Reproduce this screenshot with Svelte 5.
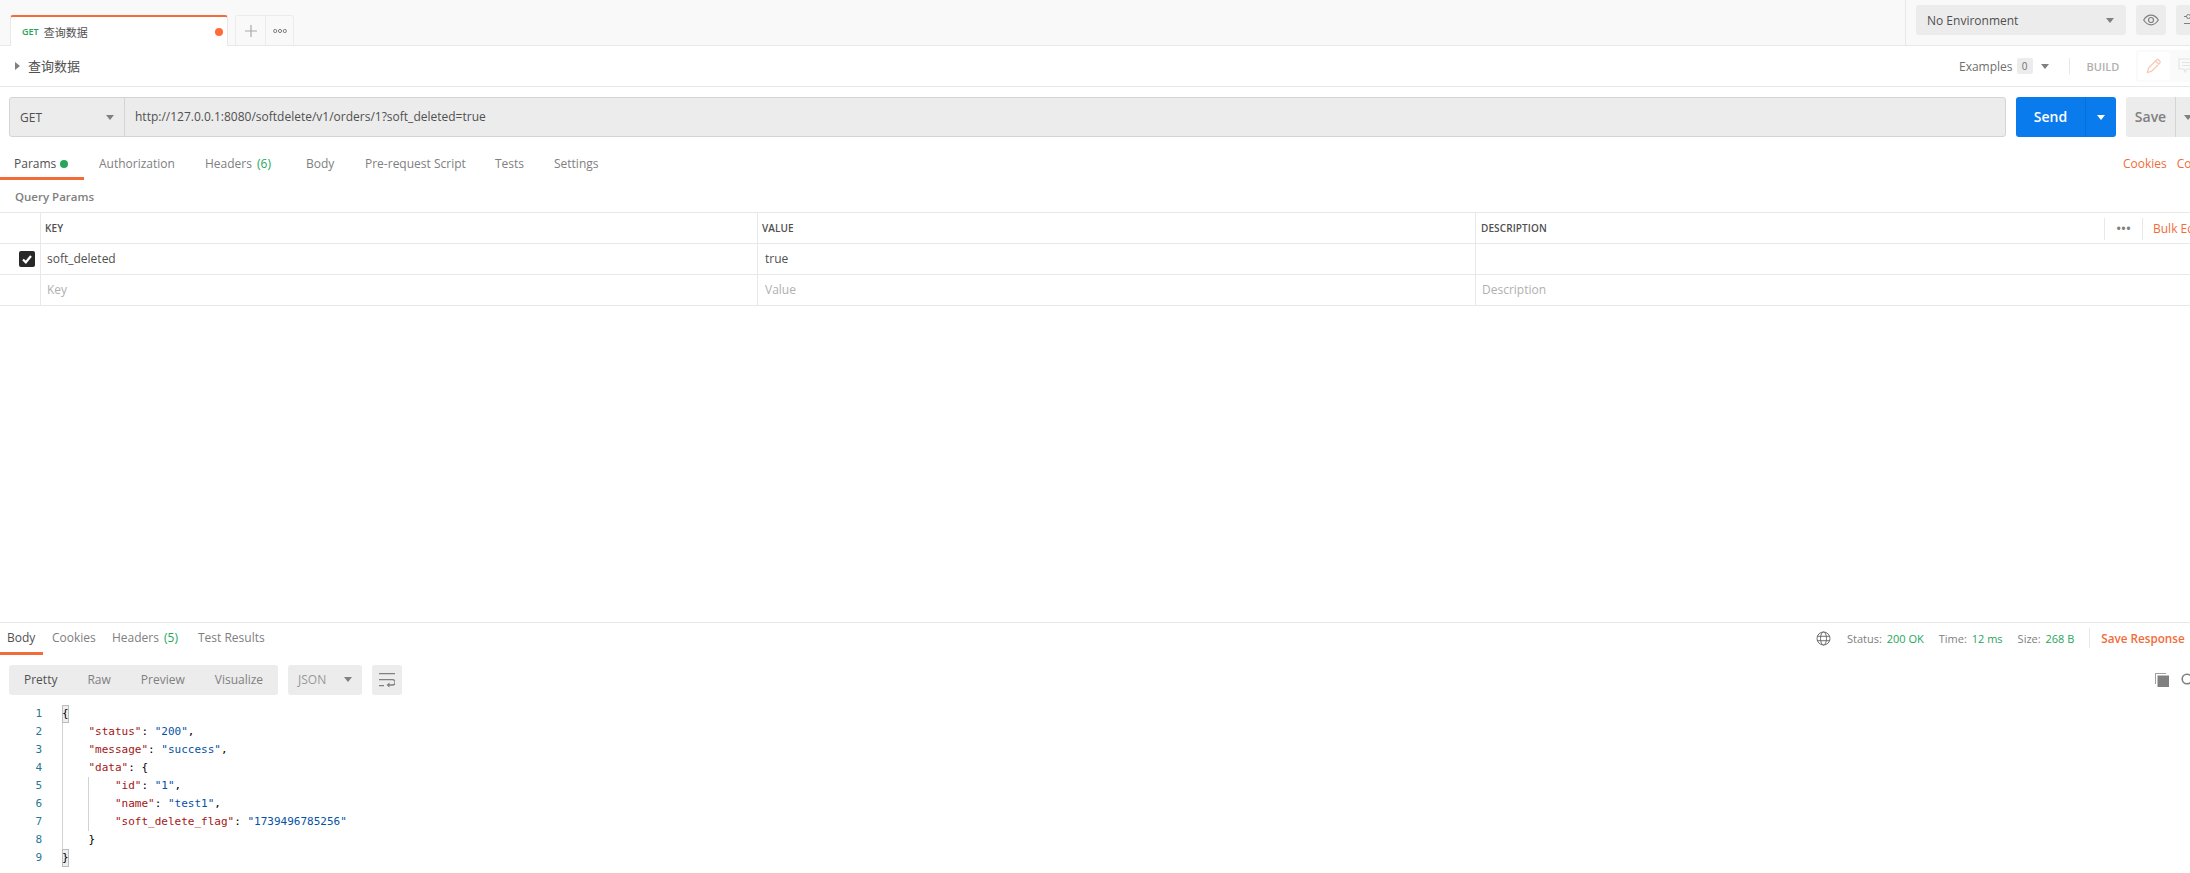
<script>
  const requestTabs = [
    { name: "Authorization", width: 106 },
    { name: "Headers", count: "(6)", width: 101 },
    { name: "Body", width: 59 },
    { name: "Pre-request Script", width: 130 },
    { name: "Tests", width: 59 },
    { name: "Settings", width: 60 }
  ];

  const responseTabs = [
    { name: "Cookies", width: 60 },
    { name: "Headers", count: "(5)", width: 86 },
    { name: "Test Results", width: 80 }
  ];

  const lines = [
    [["p", "{"]],
    [["k", '    "status"'], ["p", ": "], ["s", '"200"'], ["p", ","]],
    [["k", '    "message"'], ["p", ": "], ["s", '"success"'], ["p", ","]],
    [["k", '    "data"'], ["p", ": {"]],
    [["k", '        "id"'], ["p", ": "], ["s", '"1"'], ["p", ","]],
    [["k", '        "name"'], ["p", ": "], ["s", '"test1"'], ["p", ","]],
    [["k", '        "soft_delete_flag"'], ["p", ": "], ["s", '"1739496785256"']],
    [["p", "    }"]],
    [["p", "}"]]
  ];
</script>

<div class="page">
  <div class="topbar">
    <div class="strip">
      <div class="tab">
        <span class="get">GET</span>
        <span class="tab-name">查询数据</span>
        <span class="tab-dot"></span>
      </div>
      <div class="tab-btn plus">
        <svg width="12" height="12" viewBox="0 0 12 12"><path d="M6 0v12M0 6h12" stroke="#a9a9a9" stroke-width="1.2" fill="none" /></svg>
      </div>
      <div class="tab-btn more">
        <svg width="14" height="6" viewBox="0 0 14 6">
          <circle cx="2.2" cy="3" r="1.6" fill="none" stroke="#808080" />
          <circle cx="7" cy="3" r="1.6" fill="none" stroke="#808080" />
          <circle cx="11.8" cy="3" r="1.6" fill="none" stroke="#808080" />
        </svg>
      </div>
    </div>
    <div class="env-area">
      <div class="env">
        <span>No Environment</span>
        <i class="caret"></i>
      </div>
      <div class="square">
        <svg width="16" height="12" viewBox="0 0 16 12">
          <path d="M.7 6C2.700 2.800 5.200 1.200 8 1.200s5.300 1.600 7.300 4.800c-2 3.200-4.500 4.800-7.300 4.800S2.700 9.200.7 6z" fill="none" stroke="#808080" stroke-width="1.200" />
          <circle cx="8" cy="6" r="2.500" fill="none" stroke="#808080" stroke-width="1.200" />
        </svg>
      </div>
      <div class="square">
        <svg width="14" height="14" viewBox="0 0 14 14">
          <path d="M0 3.500h2.500M6.500 3.500H14M0 10.500h14" stroke="#808080" fill="none" />
          <circle cx="4.500" cy="3.500" r="2" fill="none" stroke="#808080" />
        </svg>
      </div>
    </div>
  </div>

  <div class="titlebar">
    <div class="title">
      <i class="arrow"></i>
      <span>查询数据</span>
    </div>
    <div class="title-right">
      <span>Examples</span>
      <span class="badge">0</span>
      <i class="caret"></i>
      <span class="vr"></span>
      <span class="build">BUILD</span>
      <div class="modes">
        <div class="mode active">
          <svg width="16" height="16" viewBox="0 0 16 16">
            <path d="M1.500 14.500l1-4.500 8-8a1.500 1.500 0 0 1 2.200 0l1 1a1.500 1.500 0 0 1 0 2.200l-8 8zM9.500 3l3.500 3.500" fill="none" stroke="#f9c9b6" stroke-width="1.300" />
          </svg>
        </div>
        <div class="mode">
          <svg width="16" height="16" viewBox="0 0 16 16">
            <path d="M1 1h14v10H9l-2 3-1-3H1zM4 4.500h8M4 7.500h8" fill="none" stroke="#e3e3e3" stroke-width="1.100" />
          </svg>
        </div>
      </div>
    </div>
  </div>

  <div class="urlrow">
    <div class="urlbox">
      <div class="method">
        <span>GET</span>
        <i class="caret"></i>
      </div>
      <div class="url">http://127.0.0.1:8080/softdelete/v1/orders/1?soft_deleted=true</div>
    </div>
    <div class="send">
      <span class="send-label">Send</span>
      <span class="send-arrow"><i class="caret white"></i></span>
    </div>
    <div class="save">
      <span class="save-label">Save</span>
      <span class="save-arrow"><i class="caret"></i></span>
    </div>
  </div>

  <div class="reqtabs">
    <div class="reqtab first">Params <span class="green-dot"></span></div>
    {#each requestTabs as t}
      <div class="reqtab" style="width: {t.width}px">
        {t.name}
        {#if t.count}<span class="count">{t.count}</span>{/if}
      </div>
    {/each}
    <div class="links">
      <span>Cookies</span>
      <span>Code</span>
    </div>
  </div>

  <div class="query-title">Query Params</div>

  <div class="params">
    <div class="row head">
      <div class="cell check"></div>
      <div class="cell">KEY</div>
      <div class="cell">VALUE</div>
      <div class="cell desc">
        <span class="desc-label">DESCRIPTION</span>
        <span class="dots">•••</span>
        <span class="bulk">Bulk Edit</span>
      </div>
    </div>
    <div class="row">
      <div class="cell check">
        <span class="checkbox">
          <svg width="12" height="12" viewBox="0 0 12 12"><path d="M2 6.500l2.800 2.800L10 3" fill="none" stroke="#fff" stroke-width="2.200" /></svg>
        </span>
      </div>
      <div class="cell body">soft_deleted</div>
      <div class="cell body value">true</div>
      <div class="cell body"></div>
    </div>
    <div class="row">
      <div class="cell check"></div>
      <div class="cell body ph">Key</div>
      <div class="cell body value ph">Value</div>
      <div class="cell body ph">Description</div>
    </div>
  </div>

  <div class="spacer"></div>

  <div class="response">
    <div class="restabs">
      <div class="restab first">Body</div>
      {#each responseTabs as t}
        <div class="restab" style="width: {t.width}px">
          {t.name}
          {#if t.count}<span class="count">{t.count}</span>{/if}
        </div>
      {/each}
      <div class="meta">
        <svg width="15" height="15" viewBox="0 0 15 15">
          <g fill="none" stroke="#707070" stroke-width="1">
            <circle cx="7.500" cy="7.500" r="6.500" />
            <ellipse cx="7.500" cy="7.500" rx="3" ry="6.500" />
            <path d="M1 5.300h13M1 9.700h13" />
          </g>
        </svg>
        <span class="stat first-stat">Status: <b>200 OK</b></span>
        <span class="stat">Time: <b>12 ms</b></span>
        <span class="stat">Size: <b>268 B</b></span>
        <span class="vr tall"></span>
        <span class="save-response">Save Response</span>
      </div>
    </div>

    <div class="toolbar">
      <div class="modes-bar">
        <span class="dark">Pretty</span>
        <span>Raw</span>
        <span>Preview</span>
        <span>Visualize</span>
      </div>
      <div class="format">
        <span>JSON</span>
        <i class="caret"></i>
      </div>
      <div class="wrap">
        <svg width="16" height="15" viewBox="0 0 16 15">
          <path d="M0 .7h16M0 6.700h13.500a2.300 2.300 0 0 1 0 5.300H9M0 12.700h5" fill="none" stroke="#808080" stroke-width="1.300" />
          <path d="M10.500 9.500v5L7.500 12z" fill="#808080" />
        </svg>
      </div>
      <div class="tool-icons">
        <svg width="14" height="14" viewBox="0 0 14 14">
          <path d="M0 0h11v1H1v10H0z" fill="#a0a0a0" />
          <rect x="2.500" y="2.500" width="11.500" height="11.500" fill="#808080" />
        </svg>
        <svg width="14" height="14" viewBox="0 0 14 14">
          <circle cx="6" cy="6" r="4.800" fill="none" stroke="#808080" stroke-width="1.600" />
          <path d="M9.500 9.500L14 14" stroke="#808080" stroke-width="1.600" />
        </svg>
      </div>
    </div>

    <div class="code">
      <div class="guide outer"></div>
      <div class="guide inner"></div>
      {#each lines as parts, i}
        <div class="line">
          <span class="num">{i + 1}</span>
          <span class="text">
            {#each parts as [type, value]}<span class={type} class:brace={i == 0 || i == 8}>{value}</span>{/each}
          </span>
        </div>
      {/each}
    </div>
  </div>
</div>

<style>
  :global(body) {
    margin: 0;
    background: #fff;
  }

  .page {
    width: 2190px;
    height: 873px;
    overflow: hidden;
    display: flex;
    flex-direction: column;
    font-family: "Open Sans", "Noto Sans CJK SC", sans-serif;
    font-size: 12px;
    color: #808080;
  }

  .topbar {
    flex: none;
    display: flex;
    height: 45px;
    background: #f9f9f9;
    border-bottom: 1px solid #e8e8e8;
  }

  .strip {
    flex: none;
    width: 1906px;
    display: flex;
    align-items: flex-end;
    padding-left: 10px;
    box-sizing: border-box;
    gap: 7px;
    border-right: 1px solid #e8e8e8;
  }

  .tab {
    flex: none;
    width: 218px;
    height: 31px;
    box-sizing: border-box;
    display: flex;
    align-items: center;
    background: #fff;
    border-top: 2px solid #f26b3a;
    border-left: 1px solid #e8e8e8;
    border-right: 1px solid #e8e8e8;
    border-radius: 3px 3px 0 0;
    margin-bottom: -1px;
    padding-left: 11px;
    font-size: 11px;
  }

  .get {
    color: #26a65b;
    font-size: 9px;
    font-weight: 600;
    margin-right: 5px;
  }

  .tab-name {
    color: #505050;
    font-size: 11px;
  }

  .tab-dot {
    width: 8px;
    height: 8px;
    border-radius: 50%;
    background: #ff6c37;
    margin-left: auto;
    margin-right: 4px;
  }

  .tab-btn {
    flex: none;
    height: 30px;
    box-sizing: border-box;
    display: flex;
    align-items: center;
    justify-content: center;
    background: #f9f9f9;
    border: 1px solid #ececec;
    border-bottom: none;
  }

  .plus {
    width: 31px;
    border-radius: 3px 0 0 0;
  }

  .more {
    width: 28px;
    margin-left: -7px;
    border-left: none;
    border-radius: 0 3px 0 0;
  }

  .env-area {
    flex: none;
    display: flex;
    gap: 10px;
    padding: 5px 0 0 10px;
  }

  .env {
    width: 210px;
    height: 30px;
    box-sizing: border-box;
    background: #ececec;
    border-radius: 3px;
    display: flex;
    align-items: center;
    justify-content: space-between;
    padding: 0 12px 0 11px;
    color: #505050;
  }

  .square {
    width: 30px;
    height: 30px;
    flex: none;
    background: #ececec;
    border-radius: 3px;
    display: flex;
    align-items: center;
    justify-content: center;
  }

  .caret {
    display: inline-block;
    width: 0;
    height: 0;
    border-left: 4px solid transparent;
    border-right: 4px solid transparent;
    border-top: 5px solid #808080;
  }

  .caret.white {
    border-top-color: #fff;
  }

  .titlebar {
    flex: none;
    height: 40px;
    display: flex;
    border-bottom: 1px solid #e8e8e8;
  }

  .title {
    flex: none;
    width: 1959px;
    box-sizing: border-box;
    padding: 0 0 1px 15px;
    display: flex;
    align-items: center;
    gap: 8px;
    color: #505050;
    font-size: 13px;
  }

  .arrow {
    width: 0;
    height: 0;
    border-top: 4px solid transparent;
    border-bottom: 4px solid transparent;
    border-left: 5px solid #808080;
  }

  .title-right {
    flex: none;
    display: flex;
    align-items: center;
    color: #707070;
  }

  .badge {
    width: 16px;
    height: 16px;
    margin-left: 4px;
    background: #ececec;
    border-radius: 2px;
    font-size: 10px;
    line-height: 16px;
    text-align: center;
  }

  .title-right .caret {
    margin-left: 8px;
  }

  .vr {
    width: 1px;
    height: 16px;
    background: #e8e8e8;
    margin-left: 20px;
  }

  .build {
    margin-left: 17px;
    font-size: 11px;
    color: #b0b0b0;
    font-weight: 600;
  }

  .modes {
    display: flex;
    margin-left: 17px;
    background: #fafafa;
    padding: 2px;
    border-radius: 3px;
  }

  .mode {
    width: 32px;
    height: 28px;
    display: flex;
    align-items: center;
    justify-content: center;
    border-radius: 3px;
  }

  .mode.active {
    background: #fff;
  }

  .urlrow {
    flex: none;
    display: flex;
    padding: 10px 0 0 9px;
    height: 40px;
  }

  .urlbox {
    flex: none;
    width: 1997px;
    box-sizing: border-box;
    display: flex;
    background: #ececec;
    border: 1px solid #d4d4d4;
    border-radius: 3px;
  }

  .method {
    width: 115px;
    flex: none;
    box-sizing: border-box;
    display: flex;
    align-items: center;
    justify-content: space-between;
    padding: 0 10px;
    color: #505050;
    border-right: 1px solid #d4d4d4;
  }

  .url {
    padding-left: 10px;
    line-height: 38px;
    color: #505050;
  }

  .send {
    flex: none;
    width: 100px;
    margin-left: 10px;
    display: flex;
    background: #097bed;
    border-radius: 3px;
    color: #fff;
    font-size: 14px;
    font-weight: 600;
  }

  .send-label {
    width: 69px;
    line-height: 40px;
    text-align: center;
    border-right: 1px solid #0a6fd4;
  }

  .send-arrow {
    flex: 1;
    display: flex;
    align-items: center;
    justify-content: center;
  }

  .save-arrow {
    flex: 1;
    display: flex;
    align-items: center;
    padding-left: 8px;
  }

  .save {
    flex: none;
    width: 100px;
    margin-left: 10px;
    display: flex;
    background: #ececec;
    border-radius: 3px;
    color: #808080;
    font-size: 14px;
    font-weight: 600;
  }

  .save-label {
    width: 49px;
    line-height: 40px;
    text-align: center;
    border-right: 1px solid #d4d4d4;
  }

  .reqtabs {
    flex: none;
    height: 43px;
    display: flex;
    box-sizing: border-box;
    padding-top: 13px;
    position: relative;
  }

  .reqtab {
    flex: none;
    box-sizing: border-box;
    padding-left: 15px;
    height: 30px;
    line-height: 28px;
    color: #808080;
    white-space: nowrap;
  }

  .reqtab.first {
    width: 84px;
    padding: 0 0 0 14px;
    color: #505050;
    background: linear-gradient(#f26b3a, #f26b3a) 0 100% / 84px 3px no-repeat;
  }

  .green-dot {
    display: inline-block;
    width: 8px;
    height: 8px;
    border-radius: 50%;
    background: #26a65b;
    margin-left: 1px;
  }

  .count {
    color: #26a65b;
    margin-left: 2px;
  }

  .links {
    position: absolute;
    left: 2123px;
    top: 13px;
    line-height: 28px;
    display: flex;
    gap: 10px;
    color: #f26b3a;
    white-space: nowrap;
  }

  .query-title {
    flex: none;
    height: 32px;
    line-height: 34px;
    padding-left: 15px;
    color: #808080;
    font-weight: 600;
    font-size: 11.500px;
  }

  .params {
    flex: none;
    border-top: 1px solid #e8e8e8;
  }

  .row {
    display: grid;
    grid-template-columns: 40px 717px 718px 1fr;
    height: 31px;
    box-sizing: border-box;
    border-bottom: 1px solid #e8e8e8;
  }

  .cell {
    border-left: 1px solid #e8e8e8;
    padding-left: 4px;
    line-height: 30px;
    white-space: nowrap;
    min-width: 0;
  }

  .cell.body {
    padding-left: 6px;
    color: #505050;
  }

  .cell.body.value {
    padding-left: 7px;
  }

  .cell.body.ph {
    color: #b0b0b0;
  }

  .check {
    border-left: none;
    padding: 0 0 0 19px;
    display: flex;
    align-items: center;
  }

  .head .cell {
    font-size: 10px;
    font-weight: 600;
    color: #505050;
    letter-spacing: 0.1px;
    line-height: 31px;
  }

  .desc {
    display: flex;
    align-items: center;
  }

  .desc-label {
    width: 624px;
    flex: none;
    box-sizing: border-box;
    padding-left: 1px;
  }

  .dots {
    flex: none;
    width: 37px;
    height: 22px;
    line-height: 21px;
    text-align: center;
    border-left: 1px solid #e8e8e8;
    border-right: 1px solid #e8e8e8;
    color: #808080;
    font-size: 13px;
    letter-spacing: 0;
  }

  .head .cell .bulk {
    margin-left: 10px;
    color: #f26b3a;
    font-size: 12px;
    font-weight: 400;
    letter-spacing: 0;
  }

  .checkbox {
    width: 16px;
    height: 16px;
    background: #282828;
    border-radius: 2px;
    display: flex;
    align-items: center;
    justify-content: center;
  }

  .spacer {
    flex: none;
    height: 316px;
  }

  .response {
    flex: none;
    border-top: 1px solid #e8e8e8;
  }

  .restabs {
    display: flex;
    height: 32px;
    position: relative;
  }

  .restab {
    flex: none;
    box-sizing: border-box;
    padding-left: 9px;
    line-height: 30px;
    white-space: nowrap;
    color: #808080;
  }

  .restab.first {
    width: 43px;
    padding-left: 7px;
    color: #505050;
    border-bottom: 3px solid #f26b3a;
  }

  .meta {
    position: absolute;
    left: 1816px;
    top: 0;
    height: 30px;
    display: flex;
    align-items: center;
    white-space: nowrap;
  }

  .stat {
    margin-left: 15px;
    font-size: 11px;
  }

  .stat.first-stat {
    margin-left: 16px;
  }

  .stat b {
    color: #26a65b;
    font-weight: 400;
    margin-left: 2px;
  }

  .vr.tall {
    height: 20px;
    margin-left: 15px;
  }

  .save-response {
    margin-left: 11px;
    color: #f26b3a;
    font-size: 11.700px;
    font-weight: 600;
  }

  .toolbar {
    display: flex;
    padding: 10px 0 0 9px;
    height: 30px;
    gap: 10px;
    position: relative;
  }

  .modes-bar {
    width: 269px;
    flex: none;
    background: #ececec;
    border-radius: 3px;
    display: flex;
    gap: 30px;
    align-items: center;
    padding: 0 0 2px 15px;
    box-sizing: border-box;
  }

  .modes-bar .dark {
    color: #505050;
  }

  .format {
    width: 74px;
    flex: none;
    box-sizing: border-box;
    background: #ececec;
    border-radius: 3px;
    display: flex;
    align-items: center;
    justify-content: space-between;
    padding: 0 10px 2px;
    color: #999;
  }

  .wrap {
    width: 30px;
    flex: none;
    background: #ececec;
    border-radius: 3px;
    display: flex;
    align-items: center;
    justify-content: center;
  }

  .tool-icons {
    position: absolute;
    left: 2155px;
    top: 18px;
    display: flex;
    gap: 12px;
  }

  .code {
    position: relative;
    margin-top: 10px;
    font-family: "DejaVu Sans Mono", "Liberation Mono", monospace;
    font-size: 11px;
    line-height: 18px;
  }

  .line {
    display: flex;
    height: 18px;
  }

  .num {
    width: 42px;
    flex: none;
    text-align: right;
    color: #237893;
  }

  .text {
    margin-left: 20px;
    white-space: pre;
  }

  .brace {
    display: inline-block;
    width: 7px;
    height: 18px;
    box-sizing: border-box;
    background: #eee;
    outline: 1px solid #bbb;
    outline-offset: -1px;
  }

  .guide {
    position: absolute;
    width: 1px;
    background: #d3d3d3;
  }

  .guide.outer {
    left: 62px;
    top: 18px;
    height: 126px;
  }

  .guide.inner {
    left: 88px;
    top: 72px;
    height: 54px;
  }

  .k {
    color: #a31515;
  }

  .s {
    color: #0451a5;
  }

  .p {
    color: #000;
  }
</style>
